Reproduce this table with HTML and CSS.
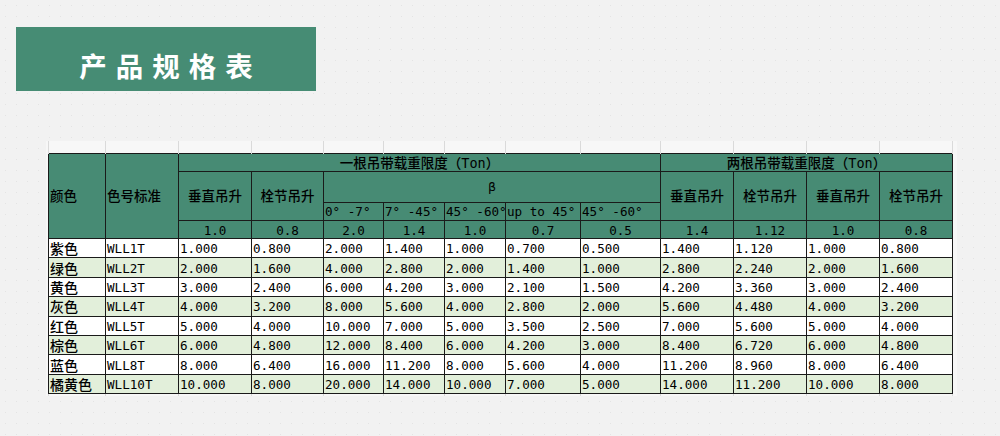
FILE: index.html
```html
<!DOCTYPE html>
<html lang="zh">
<head>
<meta charset="utf-8">
<title>产品规格表</title>
<link rel="stylesheet" href="styles.css">
</head>
<body>
<div class="banner"><h1>产品规格表</h1></div>
<div class="sheet">
<table class="spec">
<colgroup>
<col class="w57"><col class="w73"><col class="w73"><col class="w72"><col class="w60"><col class="w61"><col class="w61"><col class="w75"><col class="w80"><col class="w73"><col class="w73"><col class="w73"><col class="w73">
</colgroup>
<tbody>
<tr class="gap"><td></td><td></td><td></td><td></td><td></td><td></td><td></td><td></td><td></td><td></td><td></td><td></td><td></td></tr>
<tr class="h1">
<th rowspan="4" class="zh left">颜色</th>
<th rowspan="4" class="zh left">色号标准</th>
<th colspan="7" class="zh">一根吊带载重限度（Ton）</th>
<th colspan="4" class="zh">两根吊带载重限度（Ton）</th>
</tr>
<tr class="h2">
<th rowspan="2" class="zh">垂直吊升</th>
<th rowspan="2" class="zh">栓节吊升</th>
<th colspan="5">β</th>
<th rowspan="2" class="zh">垂直吊升</th>
<th rowspan="2" class="zh">栓节吊升</th>
<th rowspan="2" class="zh">垂直吊升</th>
<th rowspan="2" class="zh">栓节吊升</th>
</tr>
<tr class="h3">
<th class="left">0° -7°</th>
<th class="left">7° -45°</th>
<th class="left">45° -60°</th>
<th class="left">up to 45°</th>
<th class="left">45° -60°</th>
</tr>
<tr class="h4">
<th>1.0</th><th>0.8</th><th>2.0</th><th>1.4</th><th>1.0</th><th>0.7</th><th>0.5</th><th>1.4</th><th>1.12</th><th>1.0</th><th>0.8</th>
</tr>
<tr class="row">
<td class="zh">紫色</td><td>WLL1T</td><td>1.000</td><td>0.800</td><td>2.000</td><td>1.400</td><td>1.000</td><td>0.700</td><td>0.500</td><td>1.400</td><td>1.120</td><td>1.000</td><td>0.800</td>
</tr>
<tr class="row alt">
<td class="zh">绿色</td><td>WLL2T</td><td>2.000</td><td>1.600</td><td>4.000</td><td>2.800</td><td>2.000</td><td>1.400</td><td>1.000</td><td>2.800</td><td>2.240</td><td>2.000</td><td>1.600</td>
</tr>
<tr class="row">
<td class="zh">黄色</td><td>WLL3T</td><td>3.000</td><td>2.400</td><td>6.000</td><td>4.200</td><td>3.000</td><td>2.100</td><td>1.500</td><td>4.200</td><td>3.360</td><td>3.000</td><td>2.400</td>
</tr>
<tr class="row alt">
<td class="zh">灰色</td><td>WLL4T</td><td>4.000</td><td>3.200</td><td>8.000</td><td>5.600</td><td>4.000</td><td>2.800</td><td>2.000</td><td>5.600</td><td>4.480</td><td>4.000</td><td>3.200</td>
</tr>
<tr class="row">
<td class="zh">红色</td><td>WLL5T</td><td>5.000</td><td>4.000</td><td>10.000</td><td>7.000</td><td>5.000</td><td>3.500</td><td>2.500</td><td>7.000</td><td>5.600</td><td>5.000</td><td>4.000</td>
</tr>
<tr class="row alt">
<td class="zh">棕色</td><td>WLL6T</td><td>6.000</td><td>4.800</td><td>12.000</td><td>8.400</td><td>6.000</td><td>4.200</td><td>3.000</td><td>8.400</td><td>6.720</td><td>6.000</td><td>4.800</td>
</tr>
<tr class="row">
<td class="zh">蓝色</td><td>WLL8T</td><td>8.000</td><td>6.400</td><td>16.000</td><td>11.200</td><td>8.000</td><td>5.600</td><td>4.000</td><td>11.200</td><td>8.960</td><td>8.000</td><td>6.400</td>
</tr>
<tr class="row alt">
<td class="zh">橘黄色</td><td>WLL10T</td><td>10.000</td><td>8.000</td><td>20.000</td><td>14.000</td><td>10.000</td><td>7.000</td><td>5.000</td><td>14.000</td><td>11.200</td><td>10.000</td><td>8.000</td>
</tr>
<tr class="gap bottom"><td></td><td></td><td></td><td></td><td></td><td></td><td></td><td></td><td></td><td></td><td></td><td></td><td></td></tr>
</tbody>
</table>
</div>
</body>
</html>
```
FILE: styles.css
```css
html, body {
  margin: 0;
  padding: 0;
}
body {
  width: 1000px;
  height: 436px;
  overflow: hidden;
  background-color: #f2f2f2;
  background-image: radial-gradient(circle, #e4e4e4 0.7px, transparent 1px);
  background-size: 11px 11px;
  font-family: "DejaVu Sans Mono", "Noto Sans CJK SC", monospace;
  color: #000;
}
.banner {
  margin: 27px 0 0 16px;
  width: 300px;
  height: 64px;
  background: #468c74;
  display: flex;
  justify-content: center;
  align-items: center;
}
.banner h1 {
  margin: 13px 0 0 9px;
  font-family: "Noto Sans CJK SC", sans-serif;
  font-weight: 700;
  font-size: 27.5px;
  letter-spacing: 9px;
  color: #fff;
  line-height: 1;
}
.sheet {
  margin: 50px 0 0 46px;
  width: 909px;
  padding: 0 0 0 2px;
  background: #f7f7f7;
}
.spec {
  border-collapse: collapse;
  table-layout: fixed;
  width: 904px;
}
.w57 { width: 57px; }
.w60 { width: 60px; }
.w61 { width: 61px; }
.w72 { width: 72px; }
.w73 { width: 73px; }
.w75 { width: 75px; }
.w80 { width: 80px; }
.spec th, .spec td {
  padding: 0 0 0 1px;
  font-size: 12.6px;
  line-height: 14px;
  white-space: nowrap;
  overflow: hidden;
  border: 1px solid #1a1a1a;
  font-weight: 400;
  text-align: left;
}
.spec th {
  background: #478b74;
  text-align: center;
  padding: 0;
}
.spec th.left {
  text-align: left;
  padding-left: 1px;
}
.spec .zh {
  font-size: 14px;
  font-weight: 500;
}
.spec th.zh {
  font-size: 13.5px;
}
.gap td {
  height: 12px;
  border-top: none;
  border-bottom: none;
  border-left: 1px solid #dadada;
  border-right: 1px solid #dadada;
  background: #f7f7f7;
}
.gap.bottom td {
  height: 2px;
}
.h1 { height: 18px; }
.h2 { height: 31px; }
.h3 { height: 18px; }
.h4 { height: 18px; }
.h4 th { padding-top: 2px; }
.row { height: 19.4px; }
.row td {
  background: #fff;
  padding-top: 2px;
}
.row.alt td {
  background: #e2efda;
}
```
